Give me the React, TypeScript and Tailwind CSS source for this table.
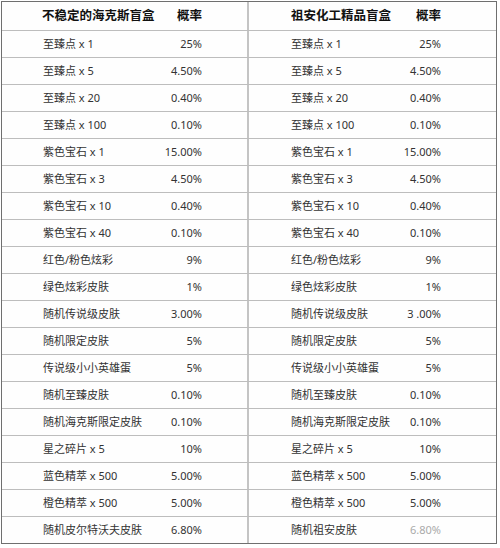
import React from "react";

const left: [string, string][] = [
  ["至臻点 x 1", "25%"],
  ["至臻点 x 5", "4.50%"],
  ["至臻点 x 20", "0.40%"],
  ["至臻点 x 100", "0.10%"],
  ["紫色宝石 x 1", "15.00%"],
  ["紫色宝石 x 3", "4.50%"],
  ["紫色宝石 x 10", "0.40%"],
  ["紫色宝石 x 40", "0.10%"],
  ["红色/粉色炫彩", "9%"],
  ["绿色炫彩皮肤", "1%"],
  ["随机传说级皮肤", "3.00%"],
  ["随机限定皮肤", "5%"],
  ["传说级小小英雄蛋", "5%"],
  ["随机至臻皮肤", "0.10%"],
  ["随机海克斯限定皮肤", "0.10%"],
  ["星之碎片 x 5", "10%"],
  ["蓝色精萃 x 500", "5.00%"],
  ["橙色精萃 x 500", "5.00%"],
  ["随机皮尔特沃夫皮肤", "6.80%"],
];

const right: [string, string][] = [
  ["至臻点 x 1", "25%"],
  ["至臻点 x 5", "4.50%"],
  ["至臻点 x 20", "0.40%"],
  ["至臻点 x 100", "0.10%"],
  ["紫色宝石 x 1", "15.00%"],
  ["紫色宝石 x 3", "4.50%"],
  ["紫色宝石 x 10", "0.40%"],
  ["紫色宝石 x 40", "0.10%"],
  ["红色/粉色炫彩", "9%"],
  ["绿色炫彩皮肤", "1%"],
  ["随机传说级皮肤", "3 .00%"],
  ["随机限定皮肤", "5%"],
  ["传说级小小英雄蛋", "5%"],
  ["随机至臻皮肤", "0.10%"],
  ["随机海克斯限定皮肤", "0.10%"],
  ["星之碎片 x 5", "10%"],
  ["蓝色精萃 x 500", "5.00%"],
  ["橙色精萃 x 500", "5.00%"],
  ["随机祖安皮肤", "6.80%"],
];

const font = { fontFamily: '"Noto Sans", "Noto Sans CJK SC", sans-serif' };

export default function App() {
  return (
    <div className="w-[500px] h-[548px] bg-white pt-[1px] pl-[1px]" style={font}>
      <div className="w-[496px] border border-[#6f6f6f] bg-[#fefefe]">
        <div className="flex h-[29px] border-b border-[#bdbdbd] items-center text-[12.5px] font-bold text-[#111]">
          <div className="flex w-[247px] h-full items-center border-r-2 border-[#c4c4c4] pl-[40px]">
            <span className="w-[120px]">不稳定的海克斯盲盒</span>
            <span className="w-[40px] text-right">概率</span>
          </div>
          <div className="flex flex-1 h-full items-center pl-[42px]">
            <span className="w-[110px]">祖安化工精品盲盒</span>
            <span className="w-[40px] text-right">概率</span>
          </div>
        </div>
        {left.map((l, i) => {
          const r = right[i];
          const last = i === left.length - 1;
          return (
            <div
              key={i}
              className={
                last
                  ? "flex h-[26px] items-center text-[11px] text-[#333]"
                  : "flex h-[27px] items-center text-[11px] text-[#333] border-b border-[#bdbdbd]"
              }
            >
              <div className="flex w-[247px] h-full items-center border-r-2 border-[#c4c4c4] pl-[41px]">
                <span className="w-[119px]">{l[0]}</span>
                <span className="w-[40px] text-right">{l[1]}</span>
              </div>
              <div className="flex flex-1 h-full items-center pl-[42px]">
                <span className="w-[110px]">{r[0]}</span>
                <span className={last ? "w-[40px] text-right text-[#aaa]" : "w-[40px] text-right"}>{r[1]}</span>
              </div>
            </div>
          );
        })}
      </div>
    </div>
  );
}
